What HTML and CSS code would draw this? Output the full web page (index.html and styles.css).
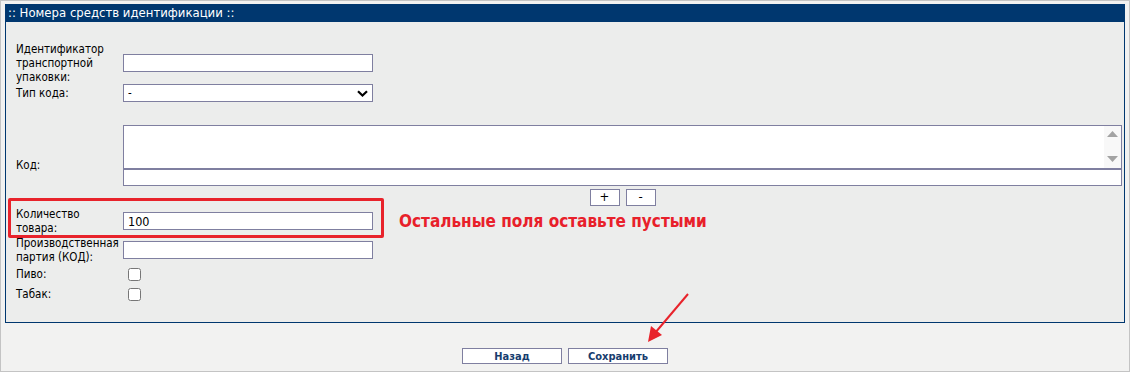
FILE: index.html
```html
<!DOCTYPE html>
<html lang="ru">
<head>
  <meta charset="UTF-8">
  <title>Номера средств идентификации</title>
  <link rel="stylesheet" href="styles.css">
</head>
<body>
  <div class="page">
    <div class="panel">
      <div class="panel-title">:: Номера средств идентификации ::</div>
      <div class="panel-body">
        <div class="row row-sscc">
          <label class="label" for="sscc">Идентификатор транспортной упаковки:</label>
          <div class="field"><input class="text" type="text" id="sscc"></div>
        </div>
        <div class="row row-type">
          <label class="label" for="codeType">Тип кода:</label>
          <div class="field">
            <span class="select-wrap">
              <select class="select" id="codeType">
                <option>-</option>
              </select>
              <svg class="chevron" width="11" height="7" viewBox="0 0 11 7"><path d="M1 1.2 L5.5 5.5 L10 1.2" fill="none" stroke="#000" stroke-width="2.2"/></svg>
            </span>
          </div>
        </div>
        <div class="row row-code">
          <label class="label" for="code">Код:</label>
          <div class="field field-col">
            <div class="code-wrap">
              <textarea class="code" id="code"></textarea>
              <div class="scroll">
                <svg width="11" height="6" viewBox="0 0 11 6"><path d="M0 6 L5.5 0 L11 6 Z" fill="#a3a3a3"/></svg>
                <svg width="11" height="6" viewBox="0 0 11 6"><path d="M0 0 L5.5 6 L11 0 Z" fill="#a3a3a3"/></svg>
              </div>
            </div>
            <input class="text wide" type="text">
            <div class="mini-buttons">
              <button class="mini" type="button">+</button>
              <button class="mini" type="button">-</button>
            </div>
          </div>
        </div>
        <div class="row row-qty">
          <label class="label" for="qty">Количество товара:</label>
          <div class="field">
            <input class="text" type="text" id="qty" value="100">
            <span class="hint">Остальные поля оставьте пустыми</span>
          </div>
        </div>
        <div class="row row-batch">
          <label class="label" for="batch">Производственная партия (КОД):</label>
          <div class="field"><input class="text" type="text" id="batch"></div>
        </div>
        <div class="row row-check">
          <label class="label" for="beer">Пиво:</label>
          <div class="field"><input class="check" type="checkbox" id="beer"></div>
        </div>
        <div class="row row-check">
          <label class="label" for="tobacco">Табак:</label>
          <div class="field"><input class="check" type="checkbox" id="tobacco"></div>
        </div>
      </div>
    </div>

    <div class="actions">
      <button class="action" type="button">Назад</button>
      <button class="action" type="button">Сохранить</button>
    </div>

    <!-- пометки поверх формы -->
    <div class="mark-box"></div>
    <svg class="mark-arrow" width="60" height="60" viewBox="0 0 60 60">
      <line x1="48" y1="4" x2="15" y2="43" stroke="#e8232b" stroke-width="2"/>
      <path d="M8 52 L11 36 L22 45 Z" fill="#e8232b"/>
    </svg>
  </div>
</body>
</html>
```

FILE: styles.css
```css
body {
  margin: 0;
  font-family: "DejaVu Sans Condensed", "DejaVu Sans", sans-serif;
  font-size: 11.5px;
  color: #000;
}

.page {
  position: relative;
  width: 1130px;
  height: 372px;
  box-sizing: border-box;
  border: 1px solid #c4c4c4;
  background-color: #f2f2f1;
  padding: 3px 4px 0;
}

.panel {
  width: 1120px;
  box-sizing: border-box;
  border: 1px solid #00376f;
  border-top: none;
  background-color: #ecedec;
}

.panel-title {
  height: 18px;
  line-height: 18px;
  margin: 0 -1px;
  padding-left: 3px;
  background-color: #00376f;
  color: #fff;
  font-size: 13px;
}

.panel-body {
  height: 300px;
  box-sizing: border-box;
  padding: 19px 2px 0 10px;
}

.row {
  display: flex;
  align-items: center;
}

.label {
  width: 107px;
  flex: none;
  box-sizing: border-box;
  padding-right: 3px;
  line-height: 14px;
}

.field {
  flex: 1;
  display: flex;
  align-items: center;
}

.row-sscc { height: 43px; }
.row-type { height: 18px; }
.row-code { height: 83px; margin-top: 21px; }
.row-qty { height: 30px; }
.row-batch { height: 28px; }
.row-check { height: 20px; }

.text, .select {
  width: 250px;
  height: 18px;
  box-sizing: border-box;
  border: 1px solid #7f7fa0;
  background-color: #fff;
  padding: 0 4px;
  font-family: inherit;
  font-size: 11.5px;
  outline: none;
}

.row-qty .text {
  font-size: 12.5px;
}

.select-wrap {
  position: relative;
  display: inline-block;
}

.select {
  display: block;
  appearance: none;
  -webkit-appearance: none;
  border-radius: 0;
}

.chevron {
  position: absolute;
  right: 5px;
  top: 6px;
}

.field-col {
  flex-direction: column;
  align-items: stretch;
  padding-top: 1px;
}

.code-wrap {
  position: relative;
}

.code {
  display: block;
  width: 100%;
  height: 44px;
  box-sizing: border-box;
  border: 1px solid #7f7fa0;
  resize: none;
  margin: 0;
  outline: none;
}

.scroll {
  position: absolute;
  top: 1px;
  right: 1px;
  bottom: 1px;
  width: 17px;
  background-color: #f8f8f8;
  display: flex;
  flex-direction: column;
  justify-content: space-between;
  align-items: center;
  padding: 5px 0 6px;
  box-sizing: border-box;
}

.wide {
  width: 100%;
  height: 17px;
}

.mini-buttons {
  display: flex;
  justify-content: center;
  gap: 6px;
  margin-top: 3px;
}

.mini {
  width: 30px;
  height: 17px;
  padding: 0;
  border: 1px solid #7f7fa0;
  background-color: #fff;
  font-family: inherit;
  font-size: 13px;
  line-height: 14px;
  color: #000;
}

.hint {
  margin-left: 26px;
  font-size: 17px;
  font-weight: bold;
  color: #e8202a;
}

.check {
  width: 13px;
  height: 13px;
  margin: 0 0 0 5px;
}

.actions {
  display: flex;
  justify-content: center;
  gap: 6px;
  margin-top: 25px;
}

.action {
  width: 100px;
  height: 16px;
  padding: 0;
  border: 1px solid #7f7fa0;
  background-color: #fff;
  font-family: inherit;
  font-size: 11px;
  font-weight: bold;
  color: #173d6e;
  line-height: 13px;
}

.mark-box {
  position: absolute;
  left: 7px;
  top: 197px;
  width: 376px;
  height: 40px;
  box-sizing: border-box;
  border: 3px solid #e8232b;
  border-radius: 2px;
}

.mark-arrow {
  position: absolute;
  left: 639px;
  top: 289px;
}
```
